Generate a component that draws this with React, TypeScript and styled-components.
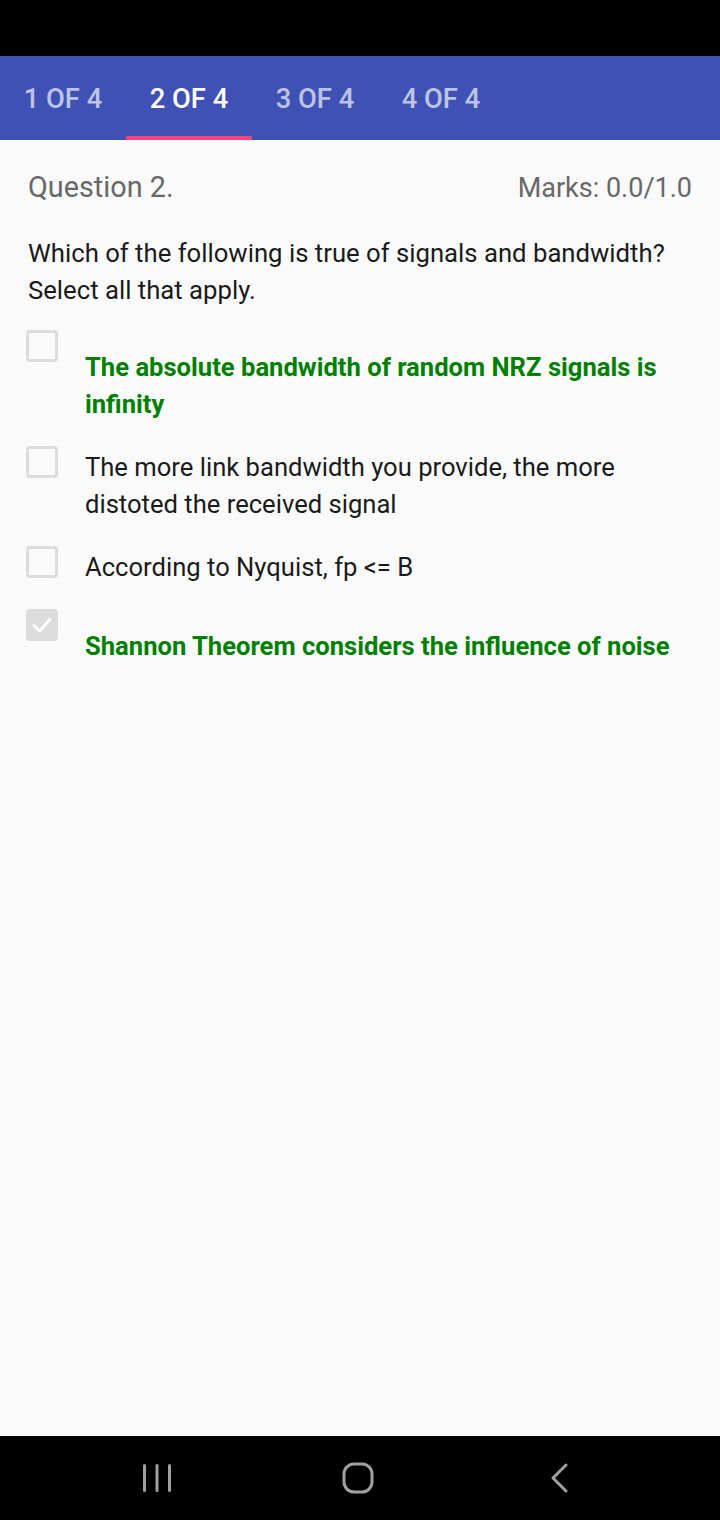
import React from "react";
import styled, { createGlobalStyle } from "styled-components";

const Global = createGlobalStyle`
  html, body { margin: 0; padding: 0; }
  body { font-family: Roboto, "Noto Sans", sans-serif; background: #000; }
  #root { width: 720px; height: 1520px; }
`;

const Screen = styled.div`
  width: 720px;
  height: 1520px;
  display: flex;
  flex-direction: column;
  background: #fafafa;
`;

const StatusBar = styled.div`
  height: 56px;
  background: #000;
  flex: none;
`;

const TabBar = styled.div`
  height: 84px;
  background: #3f51b5;
  display: flex;
  flex: none;
`;

const Tab = styled.div<{ $active?: boolean }>`
  width: 126px;
  height: 84px;
  box-sizing: border-box;
  display: flex;
  align-items: center;
  justify-content: center;
  font-family: Roboto, sans-serif;
  font-weight: 500;
  font-size: 27.3px;
  color: ${(p) => (p.$active ? "#ffffff" : "rgba(255,255,255,0.68)")};
  border-bottom: 4px solid ${(p) => (p.$active ? "#ff4081" : "transparent")};
  padding-top: 6px;
`;

const Content = styled.div`
  flex: 1;
  padding: 30px 28px 0 28px;
  display: flex;
  flex-direction: column;
`;

const Header = styled.div`
  display: flex;
  justify-content: space-between;
  align-items: baseline;
  line-height: 34px;
  color: #686868;
`;

const Title = styled.span`
  font-size: 28.8px;
`;

const Marks = styled.span`
  font-size: 27px;
`;

const QuestionText = styled.div`
  margin-top: 30px;
  font-size: 25.7px;
  line-height: 37px;
  color: #1a1a1a;
`;

const Options = styled.div`
  margin-top: 21px;
  display: flex;
  flex-direction: column;
  gap: 23px;
`;

const Row = styled.div`
  display: flex;
  align-items: flex-start;
`;

const Box = styled.div<{ $checked?: boolean }>`
  width: 32px;
  height: 32px;
  box-sizing: border-box;
  margin-left: -2px;
  border-radius: 4px;
  border: 3px solid #dcdcdc;
  background: ${(p) => (p.$checked ? "#dcdcdc" : "transparent")};
  flex: none;
  display: flex;
  align-items: center;
  justify-content: center;
`;

const OptionText = styled.div<{ $correct?: boolean }>`
  margin-left: 27px;
  padding-top: ${(p) => (p.$correct ? "19px" : "3px")};
  font-size: 25.6px;
  line-height: 37px;
  font-weight: ${(p) => (p.$correct ? 700 : 400)};
  color: ${(p) => (p.$correct ? "#008000" : "#1a1a1a")};
`;

const NavBar = styled.div`
  height: 84px;
  background: #000;
  flex: none;
  display: flex;
  align-items: center;
  padding-left: 142px;
`;

const NavSlot = styled.div<{ $w: number }>`
  width: ${(p) => p.$w}px;
  height: 40px;
  display: flex;
  align-items: center;
  justify-content: flex-start;
`;

const options = [
  { text: "The absolute bandwidth of random NRZ signals is infinity", correct: true, checked: false },
  { text: "The more link bandwidth you provide, the more distoted the received signal", correct: false, checked: false },
  { text: "According to Nyquist, fp <= B", correct: false, checked: false },
  { text: "Shannon Theorem considers the influence of noise", correct: true, checked: true },
];

export default function App() {
  return (
    <>
      <Global />
      <Screen>
        <StatusBar />
        <TabBar>
          <Tab>1 OF 4</Tab>
          <Tab $active>2 OF 4</Tab>
          <Tab>3 OF 4</Tab>
          <Tab>4 OF 4</Tab>
        </TabBar>
        <Content>
          <Header>
            <Title>Question 2.</Title>
            <Marks>Marks: 0.0/1.0</Marks>
          </Header>
          <QuestionText>
            Which of the following is true of signals and bandwidth?
            <br />
            Select all that apply.
          </QuestionText>
          <Options>
            {options.map((o, i) => (
              <Row key={i}>
                <Box $checked={o.checked}>
                  {o.checked && (
                    <svg width="24" height="24" viewBox="0 0 24 24">
                      <path d="M4 12.5 L9.5 18 L20 6.5" fill="none" stroke="#fff" strokeWidth="3" strokeLinecap="round" strokeLinejoin="round" />
                    </svg>
                  )}
                </Box>
                <OptionText $correct={o.correct}>{o.text}</OptionText>
              </Row>
            ))}
          </Options>
        </Content>
        <NavBar>
          <NavSlot $w={200}>
            <svg width="30" height="30" viewBox="0 0 30 30">
              <g stroke="#a0a0a0" strokeWidth="3" strokeLinecap="round">
                <line x1="2.5" y1="2.5" x2="2.5" y2="27.5" />
                <line x1="15" y1="2.5" x2="15" y2="27.5" />
                <line x1="27.5" y1="2.5" x2="27.5" y2="27.5" />
              </g>
            </svg>
          </NavSlot>
          <NavSlot $w={208}>
            <svg width="32" height="32" viewBox="0 0 32 32">
              <rect x="2" y="2" width="28" height="28" rx="10" fill="none" stroke="#a0a0a0" strokeWidth="3" />
            </svg>
          </NavSlot>
          <NavSlot $w={30}>
            <svg width="20" height="30" viewBox="0 0 20 30">
              <path d="M16 2 L3 15 L16 28" fill="none" stroke="#a0a0a0" strokeWidth="3" strokeLinecap="round" strokeLinejoin="round" />
            </svg>
          </NavSlot>
        </NavBar>
      </Screen>
    </>
  );
}
